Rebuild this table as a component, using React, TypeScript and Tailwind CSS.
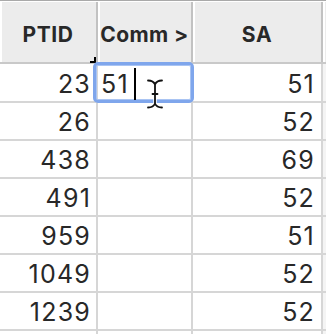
import React from 'react';

const rows = [
  { id: '23', comm: '51', sa: '51' },
  { id: '26', comm: '', sa: '52' },
  { id: '438', comm: '', sa: '69' },
  { id: '491', comm: '', sa: '52' },
  { id: '959', comm: '', sa: '51' },
  { id: '1049', comm: '', sa: '52' },
  { id: '1239', comm: '', sa: '52' },
  { id: '', comm: '', sa: '' },
];

const beam =
  'M2 1.5 C5.5 1.5 8 3 9 5.5 C10 3 12.5 1.5 16 1.5 M9 5.5 V24.5 M2 28.5 C5.5 28.5 8 27 9 24.5 C10 27 12.5 28.5 16 28.5 M6.5 15 H11.5';

function IBeam() {
  return (
    <svg className="absolute left-[146px] top-[79px]" width="18" height="30" viewBox="0 0 18 30">
      <path d={beam} fill="none" stroke="#fff" strokeWidth="3.5" strokeLinecap="round" />
      <path d={beam} fill="none" stroke="#111" strokeWidth="1.8" strokeLinecap="round" />
    </svg>
  );
}

export default function App() {
  return (
    <div className="relative w-[326px] h-[334px] overflow-hidden bg-white font-['Inter',sans-serif] text-[#282828]">
      {/* header */}
      <div className="flex h-[64px] border-t border-[#a9a9a9] border-b-2 border-b-[#c9c9c9] bg-white pt-px">
        <div className="w-[98px] flex items-center justify-center bg-[#ececec] border-r-2 border-[#c2c2c2] shadow-[inset_2px_0_0_#fff] text-[21px] font-bold tracking-[0.03em] pt-[5px]">
          PTID
        </div>
        <div className="w-[95px] flex items-center justify-center bg-[#ececec] border-r-2 border-[#c2c2c2] shadow-[inset_2px_0_0_#fff] text-[21px] font-bold tracking-[0.02em] pt-[5px] whitespace-nowrap overflow-hidden">
          Comm &gt;
        </div>
        <div className="w-[130px] flex items-center justify-center bg-[#ececec] border-r-2 border-[#c2c2c2] shadow-[inset_2px_0_0_#fff] text-[21px] font-bold tracking-[0.03em] pt-[5px]">
          SA
        </div>
        <div className="flex-1 bg-[#ececec] shadow-[inset_2px_0_0_#fff]" />
      </div>

      {/* body */}
      {rows.map((r, i) => (
        <div key={i} className={`flex border-b-2 border-[#d6d6d6] ${i === 0 ? 'h-[39px]' : 'h-[38px]'}`}>
          <div className="w-[98px] flex items-center justify-end pr-[5px] pt-[4px] border-r-2 border-[#d6d6d6] text-[25px] tracking-[1.2px]">
            {r.id}
          </div>
          <div className="w-[95px] flex items-center pl-[3px] pt-[4px] border-r-2 border-[#d6d6d6] text-[25px] tracking-[1.2px]">
            {r.comm}
          </div>
          <div className="w-[130px] flex items-center justify-end pr-[6px] pt-[4px] border-r-2 border-[#d6d6d6] text-[25px] tracking-[1.2px]">
            {r.sa}
          </div>
          <div className="flex-1 bg-[#f4f4f4]" />
        </div>
      ))}

      {/* corner mark on header */}
      <div className="absolute left-[90px] top-[61px] w-[6px] h-[2px] bg-black" />
      <div className="absolute left-[94px] top-[57px] w-[2px] h-[6px] bg-black" />

      {/* edit focus ring */}
      <div className="absolute left-[93px] top-[62px] w-[101px] h-[41px] rounded-[5px] border-[3.5px] border-[#7fa6ec] shadow-[inset_0_0_0_1px_#a9c4f3]" />
      {/* text caret */}
      <div className="absolute left-[134px] top-[68px] w-[2px] h-[32px] bg-black" />
      <IBeam />
    </div>
  );
}
